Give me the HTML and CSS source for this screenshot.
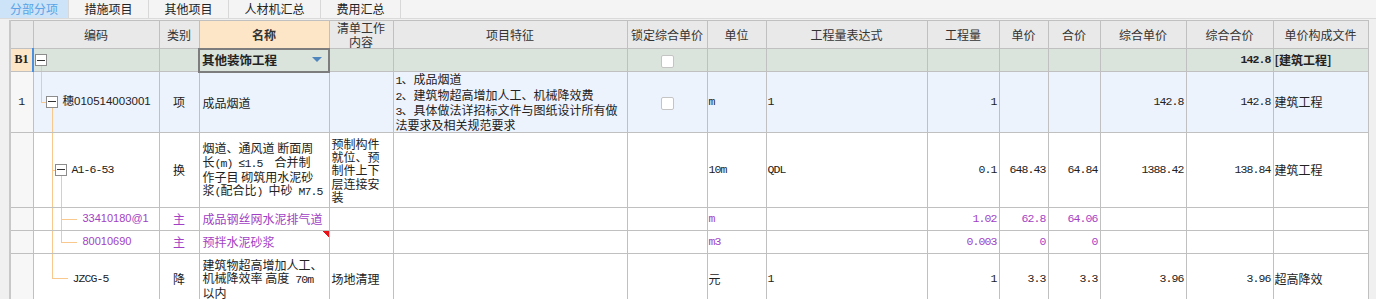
FILE: index.html
```html
<!DOCTYPE html>
<html lang="zh-CN">
<head>
    <meta charset="UTF-8">
    <title>分部分项</title>
    <link rel="stylesheet" href="styles.css">
</head>
<body>
    <div class="tabs">
        <div class="tab active">分部分项</div>
        <div class="tab">措施项目</div>
        <div class="tab">其他项目</div>
        <div class="tab wide">人材机汇总</div>
        <div class="tab">费用汇总</div>
    </div>

    <div class="sheet">
        <table class="grid">
            <colgroup>
                <col class="c-no">
                <col class="c-code">
                <col class="c-type">
                <col class="c-name">
                <col class="c-work">
                <col class="c-feat">
                <col class="c-lock">
                <col class="c-unit">
                <col class="c-expr">
                <col class="c-qty">
                <col class="c-price">
                <col class="c-sum">
                <col class="c-uprice">
                <col class="c-total">
                <col class="c-file">
            </colgroup>
            <thead>
                <tr>
                    <th></th>
                    <th>编码</th>
                    <th>类别</th>
                    <th class="hl">名称</th>
                    <th>清单工作<br>内容</th>
                    <th>项目特征</th>
                    <th>锁定综合单价</th>
                    <th>单位</th>
                    <th>工程量表达式</th>
                    <th>工程量</th>
                    <th>单价</th>
                    <th>合价</th>
                    <th>综合单价</th>
                    <th>综合合价</th>
                    <th>单价构成文件</th>
                </tr>
            </thead>
            <tbody>
                <!-- 分部 -->
                <tr class="r-group">
                    <td class="no b1">B1</td>
                    <td class="code t-b1 current"><div class="node lv0"><span class="fold"></span></div></td>
                    <td></td>
                    <td class="editing">
                        <div class="combo"><b>其他装饰工程</b><span class="caret"></span></div>
                    </td>
                    <td></td>
                    <td></td>
                    <td class="ctr"><span class="check"></span></td>
                    <td></td>
                    <td></td>
                    <td></td>
                    <td></td>
                    <td></td>
                    <td></td>
                    <td class="num bold">142.8</td>
                    <td class="bold">[建筑工程]</td>
                </tr>

                <!-- 清单 -->
                <tr class="r-item">
                    <td class="no">1</td>
                    <td class="code t-item"><div class="node lv1"><span class="fold"></span><span class="code-text">穗010514003001</span></div></td>
                    <td class="ctr">项</td>
                    <td class="name">成品烟道</td>
                    <td></td>
                    <td class="text"><span class="m">1</span>、成品烟道<br><span class="m">2</span>、建筑物超高增加人工、机械降效费<br><span class="m">3</span>、具体做法详招标文件与图纸设计所有做<br>法要求及相关规范要求</td>
                    <td class="ctr"><span class="check"></span></td>
                    <td class="m">m</td>
                    <td class="m">1</td>
                    <td class="num">1</td>
                    <td></td>
                    <td></td>
                    <td class="num">142.8</td>
                    <td class="num">142.8</td>
                    <td>建筑工程</td>
                </tr>

                <!-- 定额 -->
                <tr class="r-quota">
                    <td class="no"></td>
                    <td class="code t-quota"><div class="node lv2"><span class="fold"></span><span class="m">A1-6-53</span></div></td>
                    <td class="ctr">换</td>
                    <td class="name">烟道、通风道 断面周<br>长<span class="m">(m) ≤1.5&nbsp; </span>合并制<br>作子目 砌筑用水泥砂<br>浆<span class="m">(</span>配合比<span class="m">) </span>中砂<span class="m"> M7.5</span></td>
                    <td class="text">预制构件<br>就位、预<br>制件上下<br>层连接安<br>装</td>
                    <td></td>
                    <td></td>
                    <td class="m">10m</td>
                    <td class="m">QDL</td>
                    <td class="num">0.1</td>
                    <td class="num">648.43</td>
                    <td class="num">64.84</td>
                    <td class="num">1388.42</td>
                    <td class="num">138.84</td>
                    <td>建筑工程</td>
                </tr>

                <!-- 主材 -->
                <tr class="r-mat">
                    <td class="no"></td>
                    <td class="code t-mat"><div class="node lv3"><span class="code-text">33410180@1</span></div></td>
                    <td class="ctr">主</td>
                    <td class="name">成品钢丝网水泥排气道</td>
                    <td></td>
                    <td></td>
                    <td></td>
                    <td class="m">m</td>
                    <td></td>
                    <td class="num">1.02</td>
                    <td class="num">62.8</td>
                    <td class="num">64.06</td>
                    <td></td>
                    <td></td>
                    <td></td>
                </tr>
                <tr class="r-mat">
                    <td class="no"></td>
                    <td class="code t-mat-last"><div class="node lv3"><span class="code-text">80010690</span></div></td>
                    <td class="ctr">主</td>
                    <td class="name flagged">预拌水泥砂浆</td>
                    <td></td>
                    <td></td>
                    <td></td>
                    <td class="m">m3</td>
                    <td></td>
                    <td class="num">0.003</td>
                    <td class="num">0</td>
                    <td class="num">0</td>
                    <td></td>
                    <td></td>
                    <td></td>
                </tr>

                <!-- 降效 -->
                <tr class="r-last">
                    <td class="no"></td>
                    <td class="code t-last"><div class="node lv2b"><span class="m">JZCG-5</span></div></td>
                    <td class="ctr">降</td>
                    <td class="name">建筑物超高增加人工、<br>机械降效率 高度<span class="m"> 70m</span><br>以内</td>
                    <td class="text">场地清理</td>
                    <td></td>
                    <td></td>
                    <td>元</td>
                    <td class="m">1</td>
                    <td class="num">1</td>
                    <td class="num">3.3</td>
                    <td class="num">3.3</td>
                    <td class="num">3.96</td>
                    <td class="num">3.96</td>
                    <td>超高降效</td>
                </tr>
            </tbody>
        </table>
    </div>
</body>
</html>
```

FILE: styles.css
```css
:root {
    --line: #c0c0c0;
    --head-bg: #e9e9e9;
    --purple: #a23fc4;
    --group-bg: #dae3dc;
    --item-bg: #edf3fd;
    --g: linear-gradient(#f8c88c, #f8c88c);
}

* {
    box-sizing: border-box;
}

html, body {
    margin: 0;
    overflow: hidden;
}

body {
    background: #f0f0f0;
    font-family: "Noto Sans CJK SC", sans-serif;
    font-size: 12px;
    color: #222;
}

/* tab strip */
.tabs {
    display: flex;
    height: 19px;
    background: #f4f4f4;
    border-bottom: 1px solid #dadada;
}

.tab {
    width: 80px;
    line-height: 18px;
    text-align: center;
    border-right: 1px solid #d8d8d8;
}

.tab.active {
    width: 69px;
    background: #cde4f8;
    color: #5aa3e6;
}

.tab.wide {
    width: 92px;
}

/* grid */
.sheet {
    padding: 1px 0 0 9px;
}

.grid {
    border-collapse: collapse;
    table-layout: fixed;
    width: 1359px;
    background: #fff;
    border-left: 2px solid #c8c8c8;
}

.c-no { width: 23px; }
.c-code { width: 126px; }
.c-type { width: 40px; }
.c-name { width: 130px; }
.c-work { width: 64px; }
.c-feat { width: 234px; }
.c-lock { width: 80px; }
.c-unit { width: 59px; }
.c-expr { width: 161px; }
.c-qty { width: 72px; }
.c-price { width: 49px; }
.c-sum { width: 52px; }
.c-uprice { width: 86px; }
.c-total { width: 87px; }
.c-file { width: 95px; }

.grid th,
.grid td {
    border: 1px solid var(--line);
    padding: 0 1px;
    vertical-align: middle;
    white-space: nowrap;
    overflow: hidden;
    line-height: 13.3px;
}

.grid th {
    height: 28px;
    background: var(--head-bg);
    font-weight: normal;
    color: #333;
}

.grid th.hl {
    background: #fde5c7;
    font-weight: bold;
}

.r-group { height: 23px; background: var(--group-bg); }
.r-item { height: 61px; background: var(--item-bg); }
.r-quota { height: 75px; }
.r-mat { height: 23px; color: var(--purple); }
.r-last { height: 50px; }

.grid td.no {
    background: #f7f7f7;
    text-align: center;
    font-family: "Liberation Mono", monospace;
    font-size: 11.5px;
}

.grid td.b1 {
    background: #fde5c7;
    font-family: "Liberation Serif", serif;
    font-weight: bold;
    font-size: 12px;
}

.ctr { text-align: center; }
.bold { font-weight: bold; }

.grid td.name { padding-left: 3px; }
.grid td.text { padding-left: 2px; }

.m {
    font-family: "Liberation Mono", monospace;
    font-size: 11.5px;
    letter-spacing: -0.9px;
}

.grid td.num {
    text-align: right;
    padding-right: 2px;
    font-family: "Liberation Mono", monospace;
    font-size: 11.5px;
    letter-spacing: -0.9px;
}

/* tree column */
.grid td.code {
    padding: 0;
    background-repeat: no-repeat;
}

.grid td.current {
    border-left: 2px solid #4a90e2;
}

.t-b1 {
    background-image: var(--g);
    background-position: 7px 100%;
    background-size: 1px 50%;
}

.t-item {
    background-image: var(--g), var(--g), var(--g);
    background-position: 7px 0, 7px 50%, 18px 100%;
    background-size: 1px 50%, 5px 1px, 1px 50%;
}

.t-quota {
    background-image: var(--g), var(--g), var(--g);
    background-position: 18px 0, 18px 50%, 27px 100%;
    background-size: 1px 100%, 3px 1px, 1px 50%;
}

.t-mat {
    background-image: var(--g), var(--g), var(--g);
    background-position: 18px 0, 27px 0, 27px 50%;
    background-size: 1px 100%, 1px 100%, 16px 1px;
}

.t-mat-last {
    background-image: var(--g), var(--g), var(--g);
    background-position: 18px 0, 27px 0, 27px 50%;
    background-size: 1px 100%, 1px 50%, 16px 1px;
}

.t-last {
    background-image: var(--g), var(--g);
    background-position: 18px 0, 18px 50%;
    background-size: 1px 50%, 16px 1px;
}

.node {
    display: flex;
    align-items: center;
}

.node.lv0 { padding-left: 1px; }
.node.lv1 { padding-left: 12px; }
.node.lv2 { padding-left: 21px; }
.node.lv2b { padding-left: 39px; }
.node.lv3 { padding-left: 49px; }

.fold {
    flex: none;
    width: 12px;
    height: 12px;
    margin-right: 5px;
    border: 1px solid #8c8c8c;
    background: linear-gradient(#333, #333) center / 8px 1px no-repeat, #fff;
}

.code-text {
    font-family: "Liberation Sans", "Noto Sans CJK SC", sans-serif;
    font-size: 11px;
}

.t-item .code-text {
    font-size: 11.5px;
}

/* editor in name cell */
.grid td.editing {
    border: 2px solid #7d7d7d;
    padding: 0 2px;
}

.combo {
    display: flex;
    align-items: center;
    justify-content: space-between;
    font-size: 12.5px;
}

.caret {
    width: 0;
    height: 0;
    margin-right: 4px;
    border-left: 5px solid transparent;
    border-right: 5px solid transparent;
    border-top: 5px solid #4f86be;
}

.check {
    display: inline-block;
    width: 13px;
    height: 13px;
    vertical-align: middle;
    background: #fff;
    border: 1px solid #c4c4c4;
    border-radius: 2px;
}

.flagged {
    background: linear-gradient(to bottom left, #e8141a 50%, transparent 50%) 100% 0 / 6px 6px no-repeat;
}
```
